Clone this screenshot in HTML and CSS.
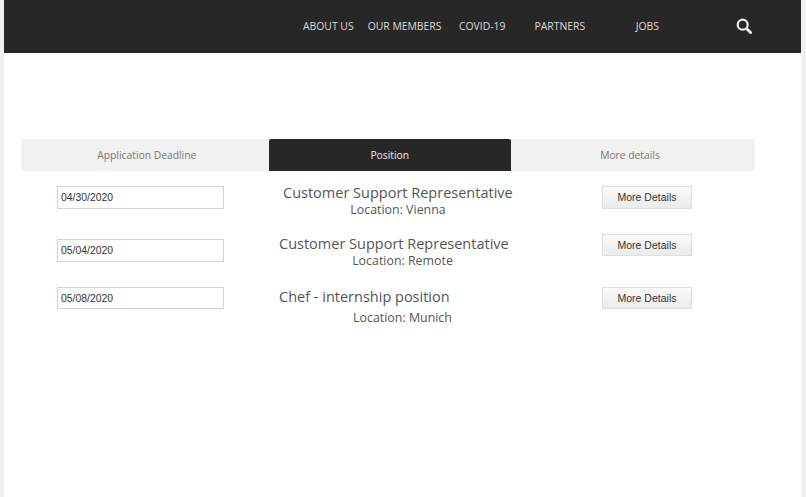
FILE: index.html
```html
<!DOCTYPE html>
<html lang="en">
<head>
    <meta charset="UTF-8">
    <title>Jobs</title>
    <link rel="stylesheet" href="styles.css">
</head>
<body>
    <div class="page">
        <header class="topbar">
            <nav class="nav">
                <a class="nav-about">ABOUT US</a>
                <a class="nav-members">OUR MEMBERS</a>
                <a class="nav-covid">COVID-19</a>
                <a class="nav-partners">PARTNERS</a>
                <a class="nav-jobs">JOBS</a>
            </nav>
            <svg class="search" viewBox="0 0 16 16" width="16" height="16">
                <circle cx="6.7" cy="6.7" r="5" fill="none" stroke="#f0f0f0" stroke-width="2.2"/>
                <path d="M10.4 10.4 L14.6 14.6" stroke="#f0f0f0" stroke-width="2.8" stroke-linecap="round"/>
            </svg>
        </header>

        <main class="content">
            <div class="tabs">
                <div class="tab tab-first">Application Deadline</div>
                <div class="tab tab-active">Position</div>
                <div class="tab tab-last">More details</div>
            </div>

            <div class="row row-1">
                <input class="date" type="text" value="04/30/2020">
                <div class="job">
                    <div class="job-title">Customer Support Representative</div>
                    <div class="job-location">Location: Vienna</div>
                </div>
                <button class="details">More Details</button>
            </div>

            <div class="row row-2">
                <input class="date" type="text" value="05/04/2020">
                <div class="job">
                    <div class="job-title">Customer Support Representative</div>
                    <div class="job-location">Location: Remote</div>
                </div>
                <button class="details">More Details</button>
            </div>

            <div class="row row-3">
                <input class="date" type="text" value="05/08/2020">
                <div class="job">
                    <div class="job-title">Chef - internship position</div>
                    <div class="job-location">Location: Munich</div>
                </div>
                <button class="details">More Details</button>
            </div>
        </main>
    </div>
</body>
</html>
```

FILE: styles.css
```css
html, body {
    height: 100%;
}

body {
    margin: 0;
    background-color: #f0f0f0;
    font-family: "Open Sans", sans-serif;
    color: #555;
    overflow: hidden;
}

.page {
    margin: 0 5px 0 4px;
    height: 100%;
    background-color: #fff;
}

.topbar {
    height: 53px;
    background-color: #272727;
    display: flex;
    align-items: center;
    box-sizing: border-box;
    padding-left: 299px;
    padding-bottom: 1px;
}

.nav {
    display: flex;
    font-size: 10.4px;
    color: #ddd;
}

.nav-members {
    margin-left: 14px;
}

.nav-covid {
    margin-left: 17.5px;
}

.nav-partners {
    margin-left: 29px;
}

.nav-jobs {
    margin-left: 50.5px;
}

.search {
    margin-left: 77px;
}

.content {
    padding: 86px 46px 0 17px;
}

.tabs {
    display: grid;
    grid-template-columns: 247.5px 242.5px 244px;
    height: 32px;
    margin-bottom: 15px;
}

.tab {
    display: flex;
    align-items: center;
    justify-content: center;
    background-color: #f1f1f1;
    font-size: 10.3px;
    color: #777;
    padding-bottom: 1px;
}

.tab-first {
    padding-left: 4px;
}

.tab-last {
    padding-right: 6px;
}

.tab-active {
    background-color: #272727;
    color: #eee;
    border-radius: 2px 2px 0 0;
}

.row {
    display: flex;
    align-items: flex-start;
    padding-left: 36px;
}

.row-1 {
    height: 48px;
}

.row-2 {
    height: 53px;
}

.date {
    box-sizing: border-box;
    width: 167px;
    height: 23px;
    padding: 0 3px;
    margin: 0;
    border: 1px solid #d4d4d4;
    font-family: "Liberation Sans", Arial, sans-serif;
    font-size: 10.4px;
    color: #333;
    background-color: #fff;
}

.row-2 .date {
    margin-top: 5px;
}

.job {
    width: 247px;
    margin: 1px 76px 0 55px;
}

.job-title {
    font-size: 14.5px;
    line-height: 18px;
    white-space: nowrap;
}

.job-location {
    font-size: 12.4px;
    line-height: 16px;
    text-align: center;
}

.row-1 .job {
    width: 230px;
    margin: -2px 89px 0 59px;
}

.row-3 .job-location {
    margin-top: 4px;
}

.row-3 .date {
    height: 22px;
}

.details {
    box-sizing: border-box;
    width: 90px;
    height: 23px;
    padding: 0 0 2px;
    border: 1px solid #dedede;
    background: linear-gradient(#fafafa, #ebebeb);
    font-family: "Liberation Sans", Arial, sans-serif;
    font-size: 10.5px;
    color: #333;
}

.row-2 .details,
.row-3 .details {
    height: 22px;
    padding-bottom: 1px;
}
```
